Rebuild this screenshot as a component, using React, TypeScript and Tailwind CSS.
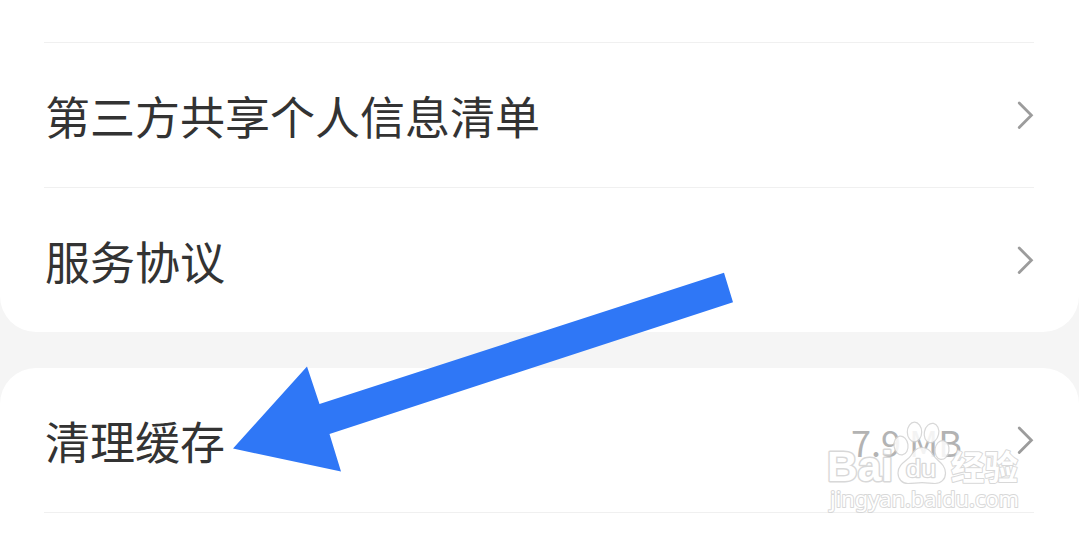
interface SettingRowProps {
  label: string;
  value?: string;
  divider?: boolean;
}

function Chevron() {
  return (
    <svg className="w-5 h-8 shrink-0" viewBox="0 0 20 32" fill="none" stroke="#9c9c9c" strokeWidth={2.8}>
      <path strokeLinecap="round" d="M5.2 4 17.400 16.300 5.200 28.600" />
    </svg>
  );
}

function SettingRow({ label, value, divider }: SettingRowProps) {
  return (
    <div
      className={`flex items-center justify-between ${divider ? "h-[145px] border-b border-[#f0f0f0]" : "h-[144px]"}`}
    >
      <span className="pl-px pt-[2px] text-[45px] leading-[64px] text-[#333333] whitespace-nowrap">{label}</span>
      <div className="flex items-center">
        {value && (
          <span className="mr-[52px] pt-px text-[36px] leading-[48px] text-[#b3b3b3] whitespace-nowrap">
            {value}
          </span>
        )}
        <Chevron />
      </div>
    </div>
  );
}

/** Outlined site mark in the bottom right corner */
function Watermark() {
  return (
    <svg
      className="absolute left-[820px] top-[415px] w-[210px] h-[105px]"
      viewBox="820 415 210 105"
      fill="#ffffff"
      stroke="#d2d2d2"
      strokeWidth={1.2}
      strokeLinejoin="round"
      opacity={0.85}
    >
      <text
        className="font-['Liberation_Sans',sans-serif] font-bold [paint-order:stroke]"
        x="827"
        y="481"
        fontSize="43"
        strokeWidth={3}
        textLength="66"
        lengthAdjust="spacingAndGlyphs"
      >
        Bai
      </text>
      <ellipse cx="901" cy="445.500" rx="7" ry="9.500" transform="rotate(-8 901 445.5)" />
      <ellipse cx="914.500" cy="432" rx="7.200" ry="9.800" />
      <ellipse cx="931.500" cy="433" rx="7.200" ry="9.800" transform="rotate(12 931.5 433)" />
      <ellipse cx="942" cy="450" rx="7" ry="9.500" transform="rotate(8 942 450)" />
      <path d="M922 447.500c-6 0-8.500 4-11 8-3 5-13 8-13 17.500 0 6 4 10.500 10 10.500 5 0 9-.8 14-.8s9 .8 13 .8c6 0 10.500-4 10.500-10.500 0-9-8.500-12-12-17.500-3-5-6-8-11.500-8Z" />
      <text
        className="font-['Liberation_Sans',sans-serif] [paint-order:stroke]"
        x="906"
        y="477"
        fontSize="23"
        strokeWidth={2.400}
        textLength="30"
        lengthAdjust="spacingAndGlyphs"
      >
        du
      </text>
      <text
        className="font-['Noto_Sans_CJK_SC',sans-serif] [paint-order:stroke]"
        x="951"
        y="480"
        fontSize="34"
        fontWeight="700"
        strokeWidth={2}
        textLength="67"
        lengthAdjust="spacingAndGlyphs"
      >
        经验
      </text>
      <text
        className="font-['Noto_Sans',sans-serif] [paint-order:stroke]"
        x="830"
        y="507"
        fontSize="22"
        strokeWidth={2}
        textLength="189"
        lengthAdjust="spacingAndGlyphs"
      >
        jingyan.baidu.com
      </text>
    </svg>
  );
}

function Arrow() {
  return (
    <svg className="absolute left-0 top-0 w-[1079px] h-[537px]" viewBox="0 0 1079 537" fill="#2f77f6">
      <path d="M233 448.500 307 366.500 319.500 404 724 272.800 733 302.300 329.500 434 341 471.500Z" />
    </svg>
  );
}

export default function App() {
  return (
    <div className="relative flex flex-col gap-9 w-[1079px] h-[537px] overflow-hidden bg-[#f5f5f5] font-['Noto_Sans_CJK_SC',sans-serif]">
      <section className="shrink-0 rounded-b-[36px] bg-white pl-[44px] pr-[45px]">
        <div className="h-[43px] border-b border-[#f0f0f0]" />
        <SettingRow label="第三方共享个人信息清单" divider />
        <SettingRow label="服务协议" />
      </section>
      <section className="shrink-0 h-[205px] rounded-t-[36px] bg-white pl-[44px] pr-[45px]">
        <SettingRow label="清理缓存" value="7.9 MB" divider />
      </section>
      <Arrow />
      <Watermark />
    </div>
  );
}
